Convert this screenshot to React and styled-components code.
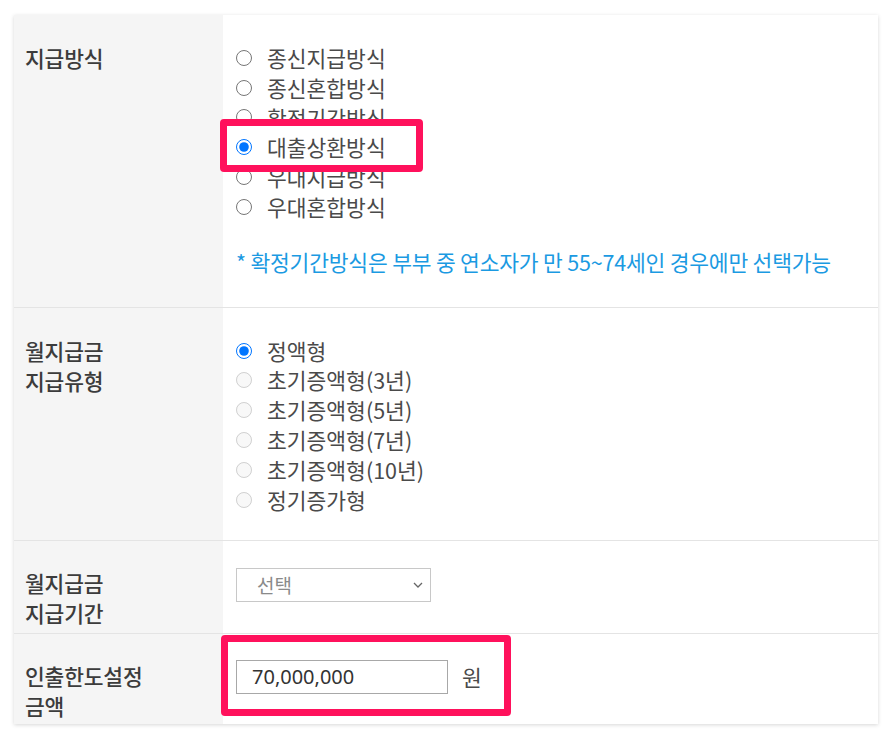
import React from "react";
import styled, { createGlobalStyle } from "styled-components";

const Global = createGlobalStyle`
  html, body { margin: 0; padding: 0; background: #fff; }
  body { font-family: "Noto Sans CJK KR", "Noto Sans", sans-serif; }
  *, *::before, *::after { box-sizing: border-box; }
`;

const Page = styled.div`
  padding: 15px 15px 15px 14px;
`;

const Card = styled.div`
  width: 864px;
  background: #fff;
  box-shadow: 0 1px 4px rgba(0, 0, 0, 0.16);
`;

const Row = styled.div`
  display: grid;
  grid-template-columns: 209px 1fr;
  border-top: ${(p) => (p.$first ? "none" : "1px solid #e4e4e4")};
`;

const Label = styled.div`
  background: #f5f5f5;
  padding: ${(p) => p.$pt || 28}px 10px ${(p) => p.$pb || 8}px 11px;
  font-size: 21.5px;
  line-height: 30px;
  font-weight: 500;
  color: #3c3c3c;
  letter-spacing: -0.2px;
`;

const Content = styled.div`
  padding: ${(p) => p.$pt || 28}px 13px ${(p) => p.$pb || 28}px 13px;
`;

const RadioList = styled.div`
  display: flex;
  flex-direction: column;
`;

const RadioItem = styled.label`
  display: flex;
  align-items: center;
  gap: 15px;
  height: 29.8px;
  font-size: 21.5px;
  line-height: 30px;
  color: #4a4a4a;
  width: fit-content;
  position: ${(p) => (p.$highlight ? "relative" : "static")};
  z-index: ${(p) => (p.$highlight ? 1 : "auto")};
  &::before {
    content: ${(p) => (p.$highlight ? '""' : "none")};
    position: absolute;
    left: -16px;
    top: -13px;
    width: 203px;
    height: 53px;
    background: #fff;
    border: 7px solid #ff115c;
    border-radius: 4px;
    z-index: -1;
  }
`;

const Radio = styled.input`
  width: 16px;
  height: 16px;
  margin: 0;
  accent-color: #0075ff;
  flex: none;
`;

const Note = styled.p`
  margin: 25px 0 0 0;
  font-size: 21.5px;
  line-height: 30px;
  color: #1b9ae2;
  letter-spacing: -0.2px;
`;

const SelectWrap = styled.div`
  position: relative;
  width: 195px;
  height: 34px;
  margin-top: -1px;
`;

const Select = styled.select`
  appearance: none;
  width: 100%;
  height: 100%;
  border: 1px solid #c8c8c8;
  background: #fff;
  padding: 0 0 0 20px;
  font-family: "Noto Sans CJK KR", "Noto Sans", sans-serif;
  font-size: 19px;
  color: #8a8a8a;
  border-radius: 0;
`;

const Chevron = styled.svg`
  position: absolute;
  right: 8px;
  top: 14px;
  pointer-events: none;
`;

const AmountRow = styled.div`
  display: flex;
  align-items: center;
  gap: 14px;
  position: relative;
  width: fit-content;
  z-index: 1;
  margin-top: -2px;
  &::before {
    content: "";
    position: absolute;
    left: -15px;
    top: -25px;
    width: 290px;
    height: 81px;
    border: 7px solid #ff115c;
    border-radius: 4px;
    z-index: -1;
  }
`;

const Input = styled.input`
  width: 212px;
  height: 34px;
  border: 1px solid #a8a8a8;
  padding: 0 0 0 15px;
  font-family: "Noto Sans", "Noto Sans CJK KR", sans-serif;
  font-size: 20px;
  color: #333;
  outline: none;
`;

const Unit = styled.span`
  font-size: 21.5px;
  color: #4a4a4a;
  line-height: 30px;
`;

const methods = [
  "종신지급방식",
  "종신혼합방식",
  "확정기간방식",
  "대출상환방식",
  "우대지급방식",
  "우대혼합방식",
];

const types = [
  "정액형",
  "초기증액형(3년)",
  "초기증액형(5년)",
  "초기증액형(7년)",
  "초기증액형(10년)",
  "정기증가형",
];

export default function App() {
  return (
    <>
      <Global />
      <Page>
        <Card>
          <Row $first>
            <Label>지급방식</Label>
            <Content $pb={30}>
              <RadioList>
                {methods.map((m) => (
                  <RadioItem key={m} $highlight={m === "대출상환방식"}>
                    <Radio
                      type="radio"
                      name="method"
                      defaultChecked={m === "대출상환방식"}
                    />
                    {m}
                  </RadioItem>
                ))}
              </RadioList>
              <Note>* 확정기간방식은 부부 중 연소자가 만 55~74세인 경우에만 선택가능</Note>
            </Content>
          </Row>
          <Row>
            <Label>
              월지급금
              <br />
              지급유형
            </Label>
            <Content $pb={25}>
              <RadioList>
                {types.map((t, i) => (
                  <RadioItem key={t}>
                    <Radio
                      type="radio"
                      name="type"
                      defaultChecked={i === 0}
                      disabled={i !== 0}
                    />
                    {t}
                  </RadioItem>
                ))}
              </RadioList>
            </Content>
          </Row>
          <Row>
            <Label $pt={27} $pb={5}>
              월지급금
              <br />
              지급기간
            </Label>
            <Content $pb={20}>
              <SelectWrap>
                <Select defaultValue="">
                  <option value="">선택</option>
                </Select>
                <Chevron width="10" height="6" viewBox="0 0 10 6">
                  <path d="M1 1l4 4 4-4" fill="none" stroke="#666" strokeWidth="1.3" />
                </Chevron>
              </SelectWrap>
            </Content>
          </Row>
          <Row>
            <Label $pt={27} $pb={3}>
              인출한도설정
              <br />
              금액
            </Label>
            <Content $pb={20}>
              <AmountRow>
                <Input defaultValue="70,000,000" />
                <Unit>원</Unit>
              </AmountRow>
            </Content>
          </Row>
        </Card>
      </Page>
    </>
  );
}
